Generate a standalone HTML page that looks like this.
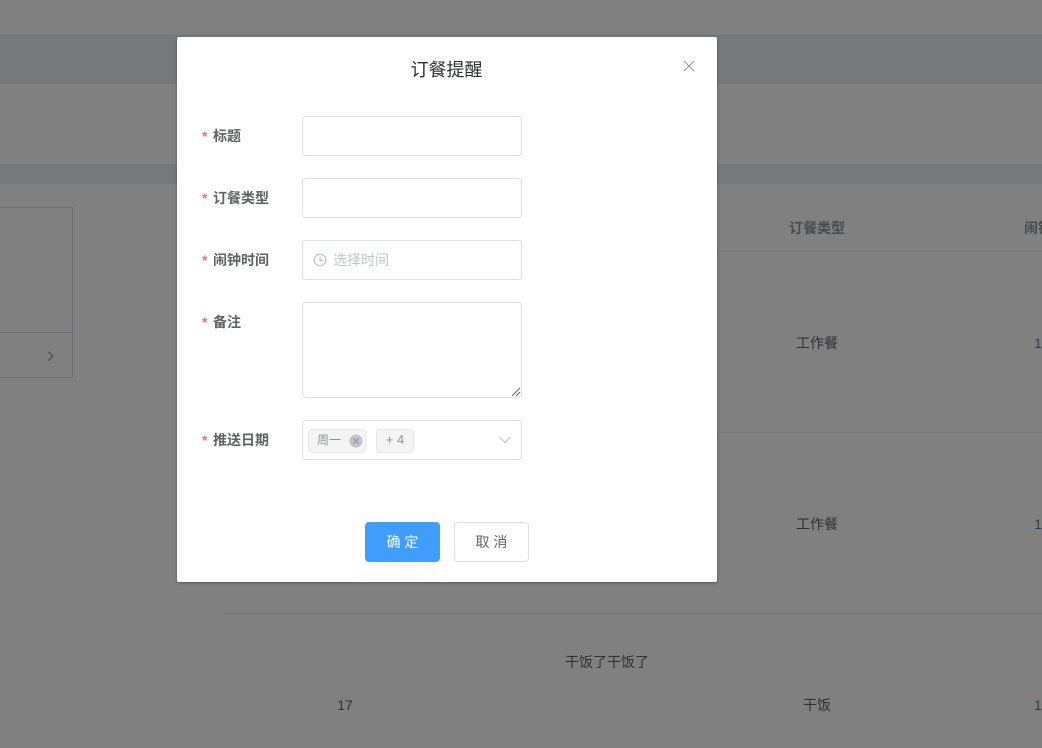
<!DOCTYPE html>
<html lang="zh">
<head>
<meta charset="utf-8">
<title>订餐提醒</title>
<style>
*{box-sizing:border-box}
html,body{margin:0;padding:0}
body{width:1042px;height:748px;position:relative;overflow:hidden;background:#808080;font-family:"Liberation Sans","Noto Sans CJK SC",sans-serif;font-size:14px}
.a{position:absolute}
.band{left:0;width:1042px;background:#76787a}
.line{height:1px;background:#77787a}
.t{position:absolute;white-space:nowrap;line-height:20px;color:#303133;transform:translateX(-50%)}
.h{font-weight:bold;color:#484a4d}
.modal{left:177px;top:37px;width:540px;height:545px;background:#fff;border-radius:2px;box-shadow:0 1px 3px rgba(0,0,0,.3)}
.title{position:absolute;left:-0.500px;top:20.500px;width:540px;text-align:center;font-size:18px;line-height:24px;color:#303133}
.lab{position:absolute;left:25px;font-size:14px;font-weight:bold;line-height:20px;color:#606266;white-space:nowrap}
.lab i{font-style:normal;font-weight:bold;color:#f56c6c;margin-right:5.500px}
.inp{position:absolute;left:125px;width:220px;background:#fff;border:1px solid #dcdfe6;border-radius:4px}
.tag{position:absolute;top:8px;height:24px;background:#f4f4f5;border:1px solid #e9e9eb;border-radius:4px;font-size:12px;line-height:20px;color:#909399}
.btn{position:absolute;top:485px;height:40px;width:75px;border-radius:4px;font-size:14px;line-height:38px;text-align:center;border:1px solid #dcdfe6;color:#606266;background:#fff}
</style>
</head>
<body>
<div class="a band" style="top:34px;height:50px"></div>
<div class="a band" style="top:164px;height:20px"></div>

<div class="a" style="left:-1px;top:207px;width:74px;height:171px;border:1px solid #6d6e71"></div>
<div class="a" style="left:0;top:332px;width:73px;height:1px;background:#6d6e71"></div>
<svg class="a" style="left:46px;top:350px" width="10" height="12" viewBox="0 0 10 12"><path d="M2.300 1.800L6.800 6.300L2.300 10.800" fill="none" stroke="#4d4d4f" stroke-width="1.200"/></svg>

<div class="a line" style="left:717px;top:251px;width:325px"></div>
<div class="a line" style="left:717px;top:432px;width:325px"></div>
<div class="a line" style="left:224px;top:613px;width:818px"></div>

<div class="t h" style="left:817px;top:218px">订餐类型</div>
<div class="t h" style="left:1052px;top:218px">闹钟时间</div>
<div class="t" style="left:817px;top:333px">工作餐</div>
<div class="t" style="left:817px;top:514px">工作餐</div>
<div class="t" style="left:607px;top:652px">干饭了干饭了</div>
<div class="t" style="left:345px;top:695px">17</div>
<div class="t" style="left:817px;top:695px">干饭</div>
<div class="t" style="left:1038px;top:333px;color:#23405f">1</div>
<div class="t" style="left:1038px;top:514px;color:#23405f">1</div>
<div class="t" style="left:1038px;top:695px;color:#23405f">1</div>

<div class="a modal">
  <div class="title">订餐提醒</div>
  <svg class="a" style="left:506px;top:23px" width="12" height="12" viewBox="0 0 12 12"><path d="M1 1L11 11M11 1L1 11" stroke="#909399" stroke-width="1" fill="none"/></svg>

  <div class="lab" style="top:89px"><i>*</i>标题</div>
  <div class="inp" style="top:79px;height:40px"></div>

  <div class="lab" style="top:151px"><i>*</i>订餐类型</div>
  <div class="inp" style="top:141px;height:40px"></div>

  <div class="lab" style="top:213px"><i>*</i>闹钟时间</div>
  <div class="inp" style="top:203px;height:40px">
    <svg class="a" style="left:9.500px;top:11.500px" width="14" height="14" viewBox="0 0 14 14"><circle cx="7" cy="7" r="5.800" fill="none" stroke="#c0c4cc" stroke-width="1.300"/><path d="M7 3.600V7.300H10.200" fill="none" stroke="#c0c4cc" stroke-width="1.300"/></svg>
    <span class="a" style="left:30px;top:9px;line-height:20px;color:#c0c4cc;white-space:nowrap">选择时间</span>
  </div>

  <div class="lab" style="top:275px"><i>*</i>备注</div>
  <div class="inp" style="top:265px;height:96px">
    <svg class="a" style="right:0;bottom:0" width="10" height="10" viewBox="0 0 10 10"><path d="M1 9L9 1M5 9L9 5" stroke="#666" stroke-width="1" fill="none"/></svg>
  </div>

  <div class="lab" style="top:393px"><i>*</i>推送日期</div>
  <div class="inp" style="top:383px;height:40px">
    <div class="tag" style="left:5px;width:58px"><span class="a" style="left:8px;top:0;white-space:nowrap">周一</span>
      <svg class="a" style="left:40px;top:4px" width="14" height="14" viewBox="0 0 14 14"><circle cx="7" cy="7" r="6.500" fill="#c0c4cc"/><path d="M4.500 4.500L9.500 9.500M9.500 4.500L4.500 9.500" stroke="#909399" stroke-width="1" fill="none"/></svg>
    </div>
    <div class="tag" style="left:73px;width:38px;text-align:center;font-size:13px">+ 4</div>
    <svg class="a" style="left:195px;top:14px" width="14" height="10" viewBox="0 0 14 10"><path d="M1.500 2L7 7.500L12.500 2" fill="none" stroke="#c0c4cc" stroke-width="1.200"/></svg>
  </div>

  <div class="btn" style="left:188px;background:#409eff;border-color:#409eff;color:#fff">确 定</div>
  <div class="btn" style="left:277px">取 消</div>
</div>
</body>
</html>
